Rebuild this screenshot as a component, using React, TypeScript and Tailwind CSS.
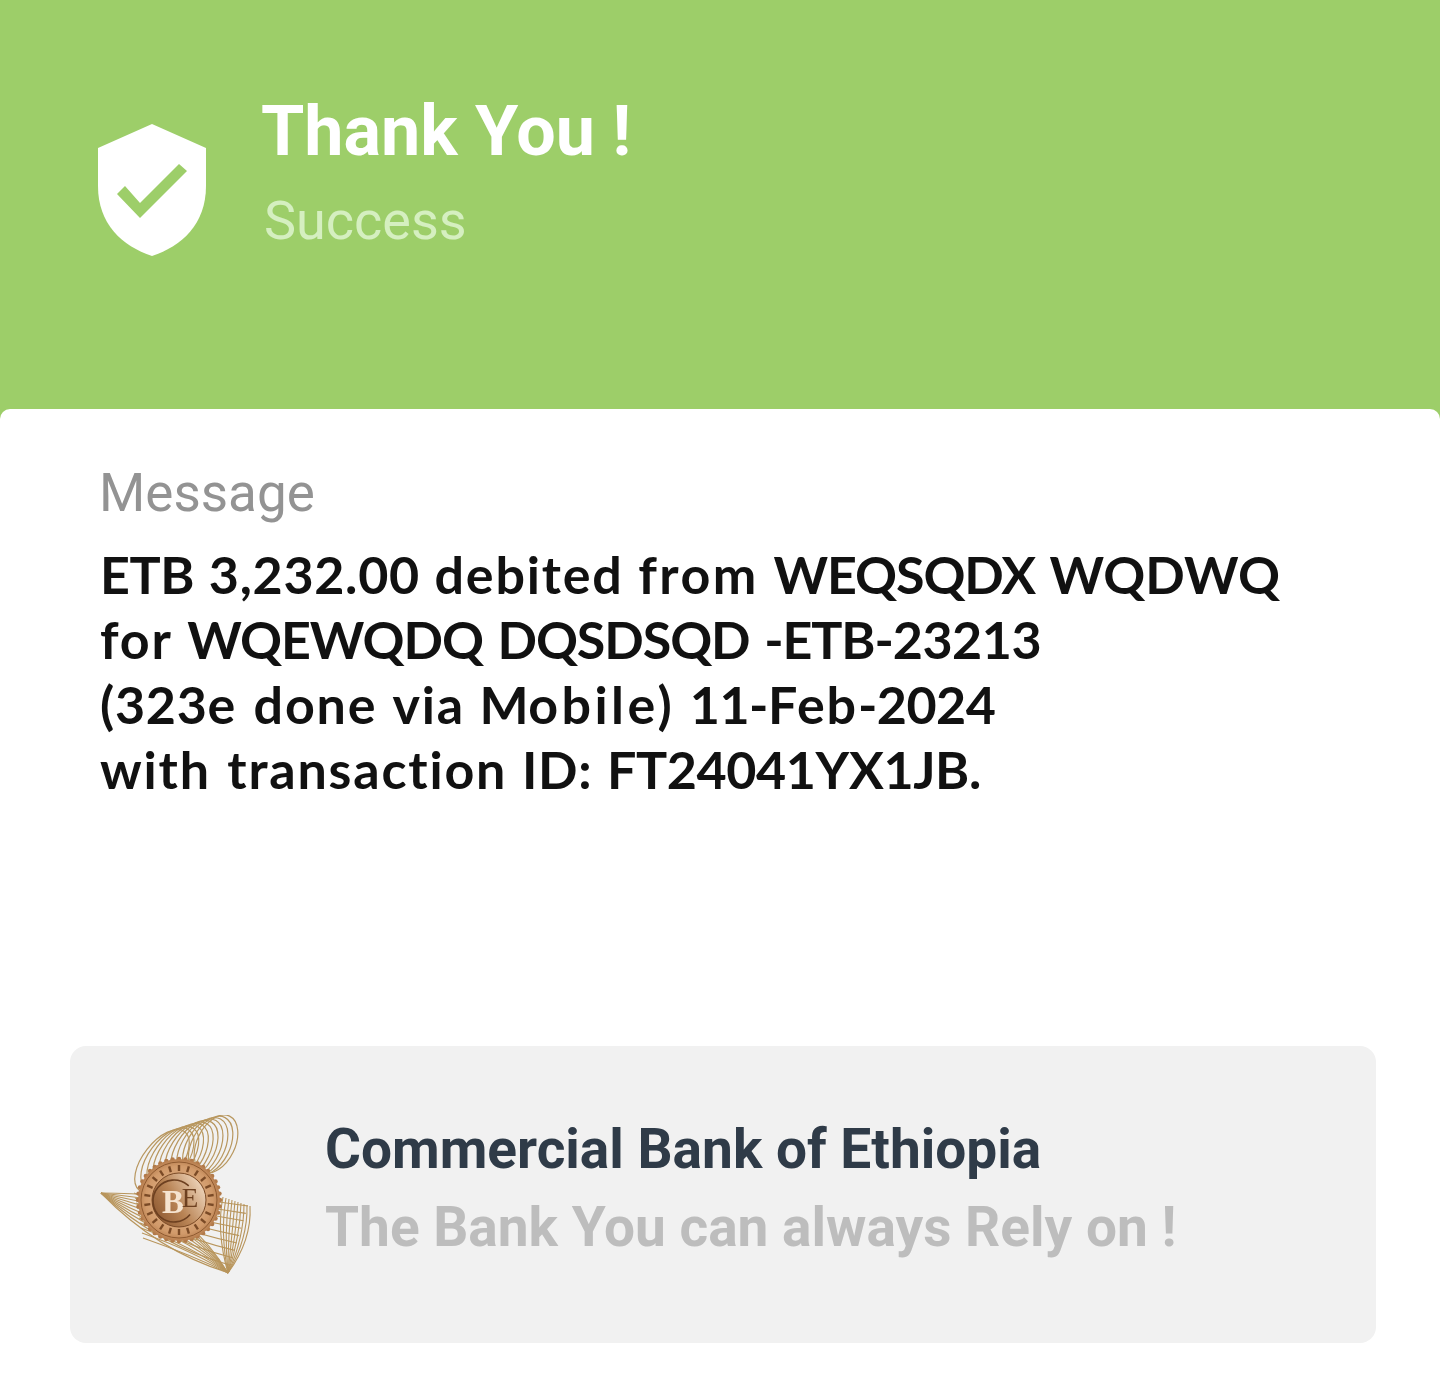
import React from 'react';

const upperLoops = Array.from({ length: 11 }, (_, i) => i);
const lowerLoops = Array.from({ length: 10 }, (_, i) => i);
const ringMarks = Array.from({ length: 22 }, (_, i) => i);
const teeth = Array.from({ length: 40 }, (_, i) => i);

const ShieldIcon: React.FC = () => (
  <svg width="108" height="132" viewBox="0 0 108 132" className="shrink-0">
    <path d="M54 0 L108 24 V62 C108 100 84 122 54 132 C24 122 0 100 0 62 V24 Z" fill="#ffffff" />
    <path d="M19 70 L27 62 L42 79 L81 40 L89 47 L42 94 Z" fill="#9dce69" />
  </svg>
);

const BankLogo: React.FC = () => (
  <svg width="156" height="160" viewBox="0 0 156 160" className="shrink-0 blur-[0.4px]">
    <defs>
      <radialGradient id="coin" cx="50%" cy="50%" r="55%">
        <stop offset="0%" stopColor="#e8c09a" />
        <stop offset="75%" stopColor="#d19a6a" />
        <stop offset="100%" stopColor="#a96f40" />
      </radialGradient>
      <linearGradient id="disc" x1="0" y1="0.8" x2="1" y2="0.2">
        <stop offset="0%" stopColor="#8b5730" />
        <stop offset="45%" stopColor="#b98455" />
        <stop offset="100%" stopColor="#f3dcc4" />
      </linearGradient>
    </defs>
    {upperLoops.map((i) => {
      const cx = 64 + i * 5.4;
      const cy = 46 - i * 1.7;
      return (
        <ellipse
          key={`u${i}`}
          cx={cx}
          cy={cy}
          rx={19}
          ry={37 - i * 0.6}
          transform={`rotate(${38 - i * 1.2} ${cx} ${cy})`}
          fill="none"
          stroke="#b8975f"
          strokeWidth="1.2"
        />
      );
    })}
    {lowerLoops.map((i) => (
      <g key={`l${i}`} fill="none" stroke="#b8955c" strokeWidth="1.1">
        <path d={`M3 78 Q60 ${78 + i * 6.5} ${150 - i * 2.2} ${91 + i * 7.4}`} />
        <path d={`M${36 + i} ${78 + i * 5} Q95 ${100 + i * 4.5} 130 158`} />
        <path d={`M130 158 Q${154 - i * 4} ${125 - i} ${152 - i * 3} ${91 - i}`} />
      </g>
    ))}
    {teeth.map((i) => (
      <circle
        key={`t${i}`}
        cx={81 + 41 * Math.cos((i * Math.PI) / 20)}
        cy={85 + 41 * Math.sin((i * Math.PI) / 20)}
        r="2.2"
        fill="#b27a49"
      />
    ))}
    <circle cx="81" cy="85" r="41" fill="url(#coin)" />
    <circle cx="81" cy="85" r="38" fill="none" stroke="#8f5a30" strokeWidth="1" />
    <circle cx="81" cy="85" r="27" fill="url(#disc)" stroke="#7a4a26" strokeWidth="1" />
    {ringMarks.map((i) => (
      <rect
        key={`d${i}`}
        x="79.8"
        y="50"
        width="2.4"
        height="6"
        fill="#7a4a26"
        transform={`rotate(${(i * 360) / 22} 81 85)`}
      />
    ))}
    <circle cx="76" cy="86" r="21" fill="none" stroke="#6d4020" strokeWidth="1.6" strokeDasharray="100 32" transform="rotate(40 76 86)" />
    <text x="75" y="98" fontFamily="Liberation Serif, serif" fontSize="33" fontWeight="700" fill="#f6e4d0" textAnchor="middle">B</text>
    <text x="92" y="92" fontFamily="Liberation Serif, serif" fontSize="27" fill="#6d4020" textAnchor="middle">E</text>
  </svg>
);

const Lower: React.FC<{ children: string }> = ({ children }) => <span className="tracking-[1.8px]">{children}</span>;
const Loose: React.FC<{ children: string }> = ({ children }) => <span className="tracking-[2.5px]">{children}</span>;
const Wide: React.FC<{ children: string }> = ({ children }) => <span className="tracking-[3.4px]">{children}</span>;
const Digits: React.FC<{ children: string }> = ({ children }) => <span className="tracking-[0.7px]">{children}</span>;
const Tight: React.FC<{ children: string }> = ({ children }) => <span className="tracking-[-0.5px]">{children}</span>;
const Caps: React.FC<{ children: string }> = ({ children }) => <span className="tracking-[-0.4px]">{children}</span>;
const Narrow: React.FC<{ children: string }> = ({ children }) => <span className="tracking-[-1.1px]">{children}</span>;

export default function App() {
  return (
    <div className="w-[1440px] h-[1396px] flex flex-col bg-[#9dce69] overflow-hidden font-['Roboto',sans-serif]">
      <header className="h-[409px] shrink-0 flex items-start pl-[98px] pt-[124px] gap-[55px]">
        <ShieldIcon />
        <div className="flex flex-col -mt-[31px]">
          <h1 className="text-[70px] leading-[76px] font-bold text-white">Thank You !</h1>
          <p className="mt-[21px] pl-[3px] text-[54px] leading-[62px] text-[#d5efc0]">Success</p>
        </div>
      </header>

      <main className="flex-1 flex flex-col bg-white rounded-t-[10px]">
        <div className="pl-[100px] pt-[54px]">
          <p className="-ml-[1px] text-[53px] leading-[60px] text-[#939393]">Message</p>
          <p className="mt-[19px] font-['Lato',sans-serif] font-bold text-[52px] leading-[65px] text-[#111111] [word-spacing:2px]">
            <Caps>ETB</Caps> <Digits>3,232.00</Digits> <Lower>debited</Lower> <Loose>from</Loose> <Narrow>WEQSQDX</Narrow> <span>WQDWQ</span>
            <br />
            <Lower>for</Lower> <Narrow>WQEWQDQ</Narrow> <Narrow>DQSDSQD</Narrow> <Narrow>-ETB-</Narrow><Tight>23213</Tight>
            <br />
            <Digits>(323</Digits><Lower>e done via</Lower> <Caps>M</Caps><Wide>obile)</Wide> <Tight>11-</Tight><Caps>F</Caps><Lower>eb</Lower><Tight>-2024</Tight>
            <br />
            <Lower>with transaction</Lower> <Digits>ID:</Digits> <Caps>FT24041YX1JB.</Caps>
          </p>
        </div>

        <section className="mt-[244px] ml-[70px] w-[1306px] h-[297px] bg-[#f1f1f1] rounded-[16px] flex items-center pl-[28px] gap-[72px]">
          <BankLogo />
          <div className="flex flex-col -mt-[14px] -ml-[1px]">
            <h2 className="text-[55px] leading-[62px] font-bold text-[#2f3b48]">Commercial Bank of Ethiopia</h2>
            <p className="mt-[16px] text-[55px] leading-[62px] font-bold text-[#bdbdbd]">The Bank You can always Rely on !</p>
          </div>
        </section>
      </main>
    </div>
  );
}
